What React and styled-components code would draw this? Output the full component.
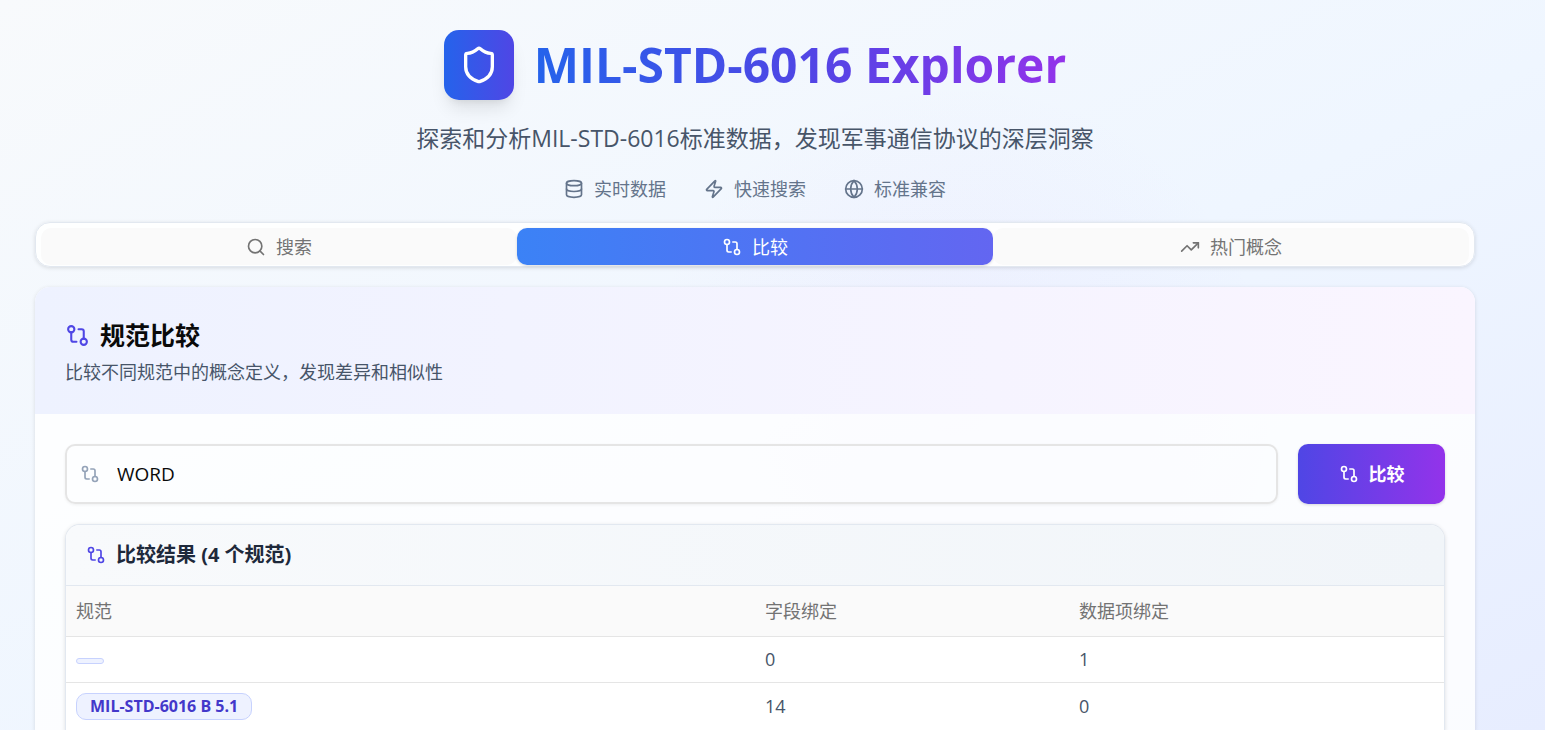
import React, { useState } from "react";
import styled, { createGlobalStyle, css } from "styled-components";
import {
  Shield,
  Database,
  Zap,
  Globe,
  Search,
  GitCompare,
  TrendingUp,
} from "lucide-react";

const GlobalStyle = createGlobalStyle`
  *, *::before, *::after { box-sizing: border-box; }
  body {
    margin: 0;
    font-family: "Open Sans", "Noto Sans CJK SC", sans-serif;
    font-size: 18px;
    line-height: 26px;
    color: #0a0a0a;
  }
  h1, h2, h3, p { margin: 0; }
  button, input { font: inherit; }
`;

const Page = styled.div`
  height: 100vh;
  overflow: auto;
  scrollbar-width: none;
  padding: 30px 70px 0 35px;
  background:
    radial-gradient(circle at 62% 55%, rgba(192, 132, 252, 0.07), transparent 320px),
    linear-gradient(to bottom right, #f8fafc 0%, #eff6ff 54%, #e7edff 100%);
`;

const Hero = styled.header`
  display: flex;
  flex-direction: column;
  align-items: center;
`;

const Brand = styled.div`
  display: flex;
  align-items: center;
  gap: 20px;
`;

const LogoTile = styled.div`
  display: grid;
  place-items: center;
  width: 70px;
  height: 70px;
  border-radius: 15px;
  color: #fff;
  background: linear-gradient(90deg, #2563eb, #4f46e5);
  box-shadow: 0 12px 18px -4px rgba(0, 0, 0, 0.1), 0 5px 8px -5px rgba(0, 0, 0, 0.1);
`;

const Title = styled.h1`
  font-size: 48px;
  line-height: 70px;
  font-weight: 700;
  color: transparent;
  background: linear-gradient(90deg, #2563eb, #4f46e5 50%, #9333ea);
  background-clip: text;
  -webkit-background-clip: text;
`;

const Subtitle = styled.p`
  margin-top: 20px;
  font-size: 23px;
  line-height: 36px;
  color: #475569;
`;

const Features = styled.div`
  display: flex;
  gap: 38px;
  margin-top: 20px;
  color: #64748b;
`;

const Feature = styled.span`
  display: flex;
  align-items: center;
  gap: 10px;
`;

const Tabs = styled.nav`
  display: grid;
  grid-template-columns: repeat(3, 1fr);
  margin-top: 20px;
  padding: 5px 5px 1px;
  border: 1px solid #e2e8f0;
  border-radius: 15px;
  background: rgba(255, 255, 255, 0.9);
  box-shadow: 0 1px 4px rgba(0, 0, 0, 0.12);
`;

const Tab = styled.button`
  display: flex;
  align-items: center;
  justify-content: center;
  gap: 10px;
  height: 37px;
  padding: 0;
  border: 0;
  border-radius: 10px;
  cursor: pointer;
  color: #737373;
  background: #fafafa;
  ${(p) =>
    p.$active &&
    css`
      color: #fff;
      background: linear-gradient(90deg, #3b82f6, #6366f1);
      box-shadow: 0 1px 3px rgba(0, 0, 0, 0.15);
    `}
`;

const Panel = styled.main`
  margin-top: 20px;
  border-radius: 15px 15px 0 0;
  background: rgba(255, 255, 255, 0.8);
  box-shadow: 0 1px 4px rgba(0, 0, 0, 0.12);
`;

const PanelHeader = styled.div`
  padding: 32px 30px 29px;
  border-radius: 15px 15px 0 0;
  background: linear-gradient(90deg, #eef2ff, #faf5ff);
`;

const PanelTitle = styled.h2`
  display: flex;
  align-items: center;
  gap: 10px;
  font-size: 25px;
  line-height: 32px;
  font-weight: 700;

  svg { color: #4f46e5; }
`;

const PanelText = styled.p`
  margin-top: 8px;
  color: #475569;
`;

const PanelBody = styled.div`
  padding: 30px 30px 0;
`;

const SearchForm = styled.form`
  display: flex;
  gap: 20px;
`;

const Field = styled.label`
  flex: 1;
  display: flex;
  align-items: center;
  gap: 17px;
  height: 60px;
  padding: 0 13px;
  border: 2px solid #e5e5e5;
  border-radius: 10px;
  box-shadow: 0 1px 3px rgba(0, 0, 0, 0.06);
  color: #94a3b8;
`;

const Input = styled.input`
  flex: 1;
  min-width: 0;
  padding: 0;
  border: 0;
  outline: 0;
  background: transparent;
  font-size: 19px;
  color: #0a0a0a;
`;

const CompareButton = styled.button`
  display: flex;
  align-items: center;
  justify-content: center;
  gap: 10px;
  width: 147px;
  height: 60px;
  padding: 0;
  border: 0;
  border-radius: 10px;
  cursor: pointer;
  font-weight: 700;
  color: #fff;
  background: linear-gradient(90deg, #4f46e5, #9333ea);
  box-shadow: 0 1px 3px rgba(0, 0, 0, 0.15);
`;

const Results = styled.section`
  margin-top: 20px;
  border: 1px solid #e2e8f0;
  border-bottom: 0;
  border-radius: 15px 15px 0 0;
  overflow: hidden;
  background: #fff;
  box-shadow: 0 1px 4px rgba(0, 0, 0, 0.12);
`;

const ResultsTitle = styled.h3`
  display: flex;
  align-items: center;
  gap: 10px;
  height: 61px;
  padding: 0 20px;
  border-bottom: 1px solid #e2e8f0;
  font-size: 20px;
  font-weight: 700;
  color: #1e293b;
  background: linear-gradient(90deg, #f8fafc, #f1f5f9);

  svg { color: #4f46e5; }
`;

const Table = styled.table`
  width: 100%;
  table-layout: fixed;
  border-collapse: collapse;
`;

const HeadCell = styled.th`
  width: ${(p) => p.$width};
  height: 50px;
  padding: 0 10px;
  border-bottom: 1px solid #e5e5e5;
  text-align: left;
  font-weight: 400;
  color: #737373;
  background: #fafafa;
`;

const Cell = styled.td`
  height: 46px;
  padding: 10px;
  border-bottom: 1px solid #e5e5e5;
  line-height: 25px;
  color: #475569;
`;

const Badge = styled.span`
  display: inline-block;
  vertical-align: middle;
  padding: 2px 13px;
  border: 1px solid #c7d2fe;
  border-radius: 10px;
  font-size: 16px;
  line-height: 21px;
  font-weight: 700;
  color: #4338ca;
  background: #eef2ff;
`;

const features = [
  { icon: Database, label: "实时数据" },
  { icon: Zap, label: "快速搜索" },
  { icon: Globe, label: "标准兼容" },
];

const tabs = [
  { icon: Search, label: "搜索" },
  { icon: GitCompare, label: "比较" },
  { icon: TrendingUp, label: "热门概念" },
];

const rows = [
  { spec: "", fields: 0, items: 1 },
  { spec: "MIL-STD-6016 B 5.1", fields: 14, items: 0 },
];

export default function App() {
  const [active, setActive] = useState("比较");
  const [term, setTerm] = useState("WORD");

  return (
    <>
      <GlobalStyle />
      <Page>
        <Hero>
          <Brand>
            <LogoTile>
              <Shield size={40} />
            </LogoTile>
            <Title>MIL-STD-6016 Explorer</Title>
          </Brand>
          <Subtitle>探索和分析MIL-STD-6016标准数据，发现军事通信协议的深层洞察</Subtitle>
          <Features>
            {features.map(({ icon: Icon, label }) => (
              <Feature key={label}>
                <Icon size={20} />
                {label}
              </Feature>
            ))}
          </Features>
        </Hero>

        <Tabs>
          {tabs.map(({ icon: Icon, label }) => (
            <Tab
              key={label}
              type="button"
              $active={label === active}
              onClick={() => setActive(label)}
            >
              <Icon size={20} />
              {label}
            </Tab>
          ))}
        </Tabs>

        <Panel>
          <PanelHeader>
            <PanelTitle>
              <GitCompare size={25} />
              规范比较
            </PanelTitle>
            <PanelText>比较不同规范中的概念定义，发现差异和相似性</PanelText>
          </PanelHeader>
          <PanelBody>
            <SearchForm onSubmit={(e) => e.preventDefault()}>
              <Field>
                <GitCompare size={20} />
                <Input
                  aria-label="概念"
                  value={term}
                  onChange={(e) => setTerm(e.target.value)}
                />
              </Field>
              <CompareButton type="submit">
                <GitCompare size={20} />
                比较
              </CompareButton>
            </SearchForm>

            <Results>
              <ResultsTitle>
                <GitCompare size={20} />
                比较结果 (4 个规范)
              </ResultsTitle>
              <Table>
                <thead>
                  <tr>
                    <HeadCell $width="50%">规范</HeadCell>
                    <HeadCell $width="314px">字段绑定</HeadCell>
                    <HeadCell>数据项绑定</HeadCell>
                  </tr>
                </thead>
                <tbody>
                  {rows.map((row) => (
                    <tr key={row.spec}>
                      <Cell>
                        <Badge>{row.spec}</Badge>
                      </Cell>
                      <Cell>{row.fields}</Cell>
                      <Cell>{row.items}</Cell>
                    </tr>
                  ))}
                </tbody>
              </Table>
            </Results>
          </PanelBody>
        </Panel>
      </Page>
    </>
  );
}
